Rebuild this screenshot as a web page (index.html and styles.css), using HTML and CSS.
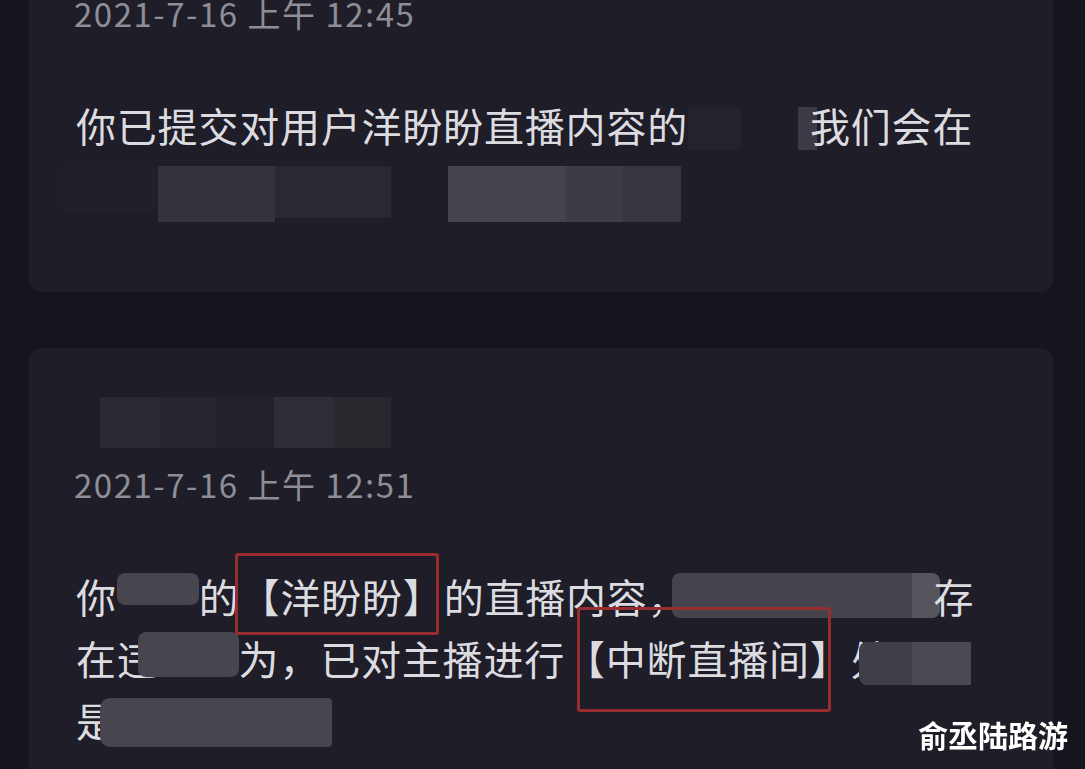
FILE: index.html
```html
<!DOCTYPE html>
<html lang="zh-CN">
<head>
    <meta charset="UTF-8">
    <meta name="viewport" content="width=device-width, initial-scale=1.0">
    <link rel="stylesheet" href="styles.css">
    <title>系统通知</title>
</head>
<body>
    <main class="feed">
        <!-- report receipt -->
        <section class="card">
            <div class="time">2021-7-16 上午 12:45</div>
            <p class="msg">你已提交对用户洋盼盼直播内容的<span class="blot blot-receipt"></span>我们会在</p>
            <div class="tiles tiles-receipt">
                <span></span><span></span><span></span><span></span><span></span><span></span><span></span>
            </div>
        </section>

        <!-- report result -->
        <section class="card card-result">
            <div class="tiles tiles-name">
                <span></span><span></span><span></span><span></span><span></span>
            </div>
            <div class="time">2021-7-16 上午 12:51</div>
            <p class="msg">你<span class="blot blot-a"></span>的<span class="mark mark-name">【洋盼盼】</span>的直播内容，<span class="blot blot-b"></span>存<br>在违<span class="blot blot-c"></span>为，已对主播进行<span class="mark mark-action">【中断直播间】</span>处<span class="blot blot-d"></span><br>是<span class="blot blot-e"></span></p>
        </section>
    </main>

    <div class="watermark">俞丞陆路游</div>
</body>
</html>
```

FILE: styles.css
```css
body {
    margin: 0;
    height: 769px;
    overflow: hidden;
    background-color: #151520;
    font-family: "Noto Sans CJK SC", "Noto Sans", sans-serif;
}

.feed {
    display: flex;
    flex-direction: column;
    gap: 56px;
    margin-top: -40px;
    padding: 0 32px 0 29px;
}

.card {
    background-color: #1e1d28;
    border-radius: 12px;
    padding: 33px 60px 70px 47px;
}

.card-result {
    padding-top: 49px;
    padding-bottom: 120px;
}

.time {
    margin-left: -2px;
    font-size: 33px;
    line-height: 40px;
    letter-spacing: 1.5px;
    color: #8e8e96;
}

.tiles-name + .time {
    margin-top: 16px;
}

.msg {
    margin: 61px 0 0;
    font-size: 40px;
    line-height: 62px;
    letter-spacing: 0.8px;
    color: #dcdce0;
    white-space: nowrap;
}

/* mosaic smudges inside the text */
.blot {
    display: inline-block;
    background-color: #47464f;
    border-radius: 8px;
}

.blot-receipt {
    width: 129px;
    height: 43px;
    margin-right: -7px;
    vertical-align: -8px;
    border-radius: 0;
    background: linear-gradient(to right, #24232d 0 53px, transparent 53px 110px, #3c3b45 110px);
}

.blot-a {
    width: 82px;
    height: 32px;
    vertical-align: 8px;
}

.blot-b {
    width: 268px;
    height: 45px;
    margin: 0 -7px 0 -16px;
    vertical-align: -5px;
    background: linear-gradient(to right, #45444d 0 240px, #56555e 240px);
}

.blot-c {
    width: 101px;
    height: 45px;
    margin-left: -20px;
    vertical-align: -2px;
}

.blot-d {
    width: 112px;
    height: 43px;
    margin-left: -32px;
    vertical-align: -10px;
    border-radius: 8px 0 0 8px;
    background: linear-gradient(to right, #403f48 0 53px, #4b4a53 53px);
}

.blot-e {
    width: 232px;
    height: 49px;
    margin-left: -17px;
    vertical-align: -10px;
    border-radius: 10px 4px 4px 10px;
}

/* mosaic rows */
.tiles {
    display: grid;
}

.tiles-receipt {
    grid-template-columns: 96px 117px 116px 57px 118px 57px 58px;
    width: 619px;
    height: 56px;
    margin: 10px 0 0 -14px;
}

.tiles-receipt span:nth-child(1) { background-color: #201f2a; height: 45px; }
.tiles-receipt span:nth-child(2) { background-color: #34333c; }
.tiles-receipt span:nth-child(3) { background-color: #2a2931; height: 52px; }
.tiles-receipt span:nth-child(5) { background-color: #45444d; }
.tiles-receipt span:nth-child(6) { background-color: #3d3c45; }
.tiles-receipt span:nth-child(7) { background-color: #37363f; }

.tiles-name {
    grid-template-columns: 60px 57px 57px 60px 57px;
    width: 291px;
    height: 51px;
    margin-left: 24px;
}

.tiles-name span:nth-child(1) { background-color: #2b2a34; }
.tiles-name span:nth-child(2) { background-color: #26252e; }
.tiles-name span:nth-child(3) { background-color: #23222b; }
.tiles-name span:nth-child(4) { background-color: #2f2e37; }
.tiles-name span:nth-child(5) { background-color: #29282f; }

/* red highlight boxes drawn over the text */
.mark {
    position: relative;
}

.mark::after {
    content: "";
    position: absolute;
    border: 3px solid #972d2e;
    border-radius: 3px;
}

.mark-name::after {
    top: -14px;
    bottom: -10px;
    left: -5px;
    right: 5px;
}

.mark-action::after {
    top: -22px;
    bottom: -25px;
    left: 12px;
    right: 20px;
}

.watermark {
    position: fixed;
    right: 17px;
    bottom: 17px;
    font-size: 30px;
    font-weight: 700;
    line-height: 36px;
    color: #ffffff;
}
```
